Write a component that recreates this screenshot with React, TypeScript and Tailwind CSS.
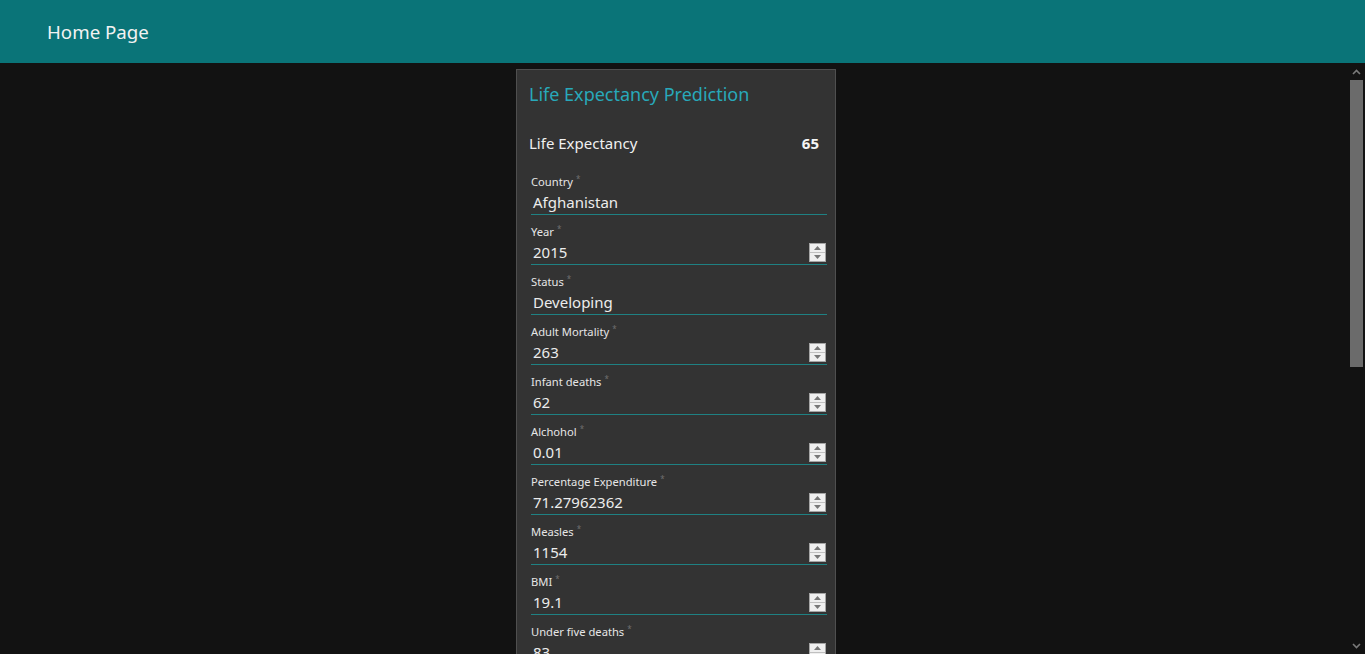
import React from "react";

type Field = { label: string; value: string; spin: boolean };

const fields: Field[] = [
  { label: "Country", value: "Afghanistan", spin: false },
  { label: "Year", value: "2015", spin: true },
  { label: "Status", value: "Developing", spin: false },
  { label: "Adult Mortality", value: "263", spin: true },
  { label: "Infant deaths", value: "62", spin: true },
  { label: "Alchohol", value: "0.01", spin: true },
  { label: "Percentage Expenditure", value: "71.27962362", spin: true },
  { label: "Measles", value: "1154", spin: true },
  { label: "BMI", value: "19.1", spin: true },
  { label: "Under five deaths", value: "83", spin: true },
  { label: "Polio", value: "6", spin: true },
  { label: "Total expenditure", value: "8.16", spin: true },
  { label: "Diphtheria", value: "65", spin: true },
];

function Spinner() {
  return (
    <div className="flex h-[19px] w-[17px] flex-col border border-[#a5a5a5] bg-[#efefef]">
      <div className="flex flex-1 items-center justify-center border-b border-[#c0c0c0]">
        <svg width="7" height="4" viewBox="0 0 7 4">
          <path d="M0 4 L3.5 0 L7 4 Z" fill="#777777" />
        </svg>
      </div>
      <div className="flex flex-1 items-center justify-center">
        <svg width="7" height="4" viewBox="0 0 7 4">
          <path d="M0 0 L3.5 4 L7 0 Z" fill="#777777" />
        </svg>
      </div>
    </div>
  );
}

function FieldRow({ f }: { f: Field }) {
  return (
    <div className="mb-[9px] flex flex-col">
      <div className="flex h-[16px] items-center text-[11.2px] leading-[16px] text-[#e6e6e6]">
        <span>{f.label}</span>
        <span className="ml-[3px] -mt-[6px] text-[8px] text-[#6f6f6f]">*</span>
      </div>
      <div className="flex h-[25px] items-center justify-between border-b border-[#1f8183] pl-[2px] pr-[1px]">
        <span className="text-[15px] leading-[24px] text-[#ececec]">{f.value}</span>
        {f.spin && <Spinner />}
      </div>
    </div>
  );
}

function Scrollbar() {
  return (
    <div className="flex w-[17px] shrink-0 flex-col bg-[#121212]">
      <div className="flex h-[17px] items-center justify-center">
        <svg width="9" height="6" viewBox="0 0 9 6">
          <path d="M1 5 L4.5 1.5 L8 5" stroke="#7a7a7a" strokeWidth="1.6" fill="none" />
        </svg>
      </div>
      <div className="flex flex-1 flex-col px-[2px]">
        <div className="h-[287px] w-full bg-[#6b6b6b]" />
      </div>
      <div className="flex h-[17px] items-center justify-center">
        <svg width="9" height="6" viewBox="0 0 9 6">
          <path d="M1 1 L4.5 4.5 L8 1" stroke="#7a7a7a" strokeWidth="1.6" fill="none" />
        </svg>
      </div>
    </div>
  );
}

export default function App() {
  return (
    <div
      className="flex h-[654px] w-full flex-col overflow-hidden bg-[#121212]"
      style={{ fontFamily: '"Noto Sans", "Open Sans", sans-serif' }}
    >
      <header className="flex h-[63px] shrink-0 items-center bg-[#0a7478] pl-[47px]">
        <span className="text-[18.7px] leading-[28px] text-[#f2f2f2]">Home Page</span>
      </header>
      <div className="flex min-h-0 flex-1">
        <div className="flex min-w-0 flex-1 justify-center overflow-hidden pt-[6px]">
          <div className="ml-[4px] flex w-[320px] flex-col self-start border border-[#4f4f4f] bg-[#333333] pl-[12px] pr-[8px] pt-[10px]">
            <div className="mb-[23px] text-[18px] leading-[28px] text-[#28a9ba]">
              Life Expectancy Prediction
            </div>
            <div className="mb-[19px] flex h-[24px] items-center justify-between pr-[8px]">
              <span className="text-[15px] leading-[24px] text-[#f0f0f0]">Life Expectancy</span>
              <span className="text-[15px] font-bold leading-[24px] text-[#f5f5f5]">65</span>
            </div>
            <div className="flex flex-col pl-[2px]">
              {fields.map((f) => (
                <FieldRow key={f.label} f={f} />
              ))}
            </div>
          </div>
        </div>
        <Scrollbar />
      </div>
    </div>
  );
}
